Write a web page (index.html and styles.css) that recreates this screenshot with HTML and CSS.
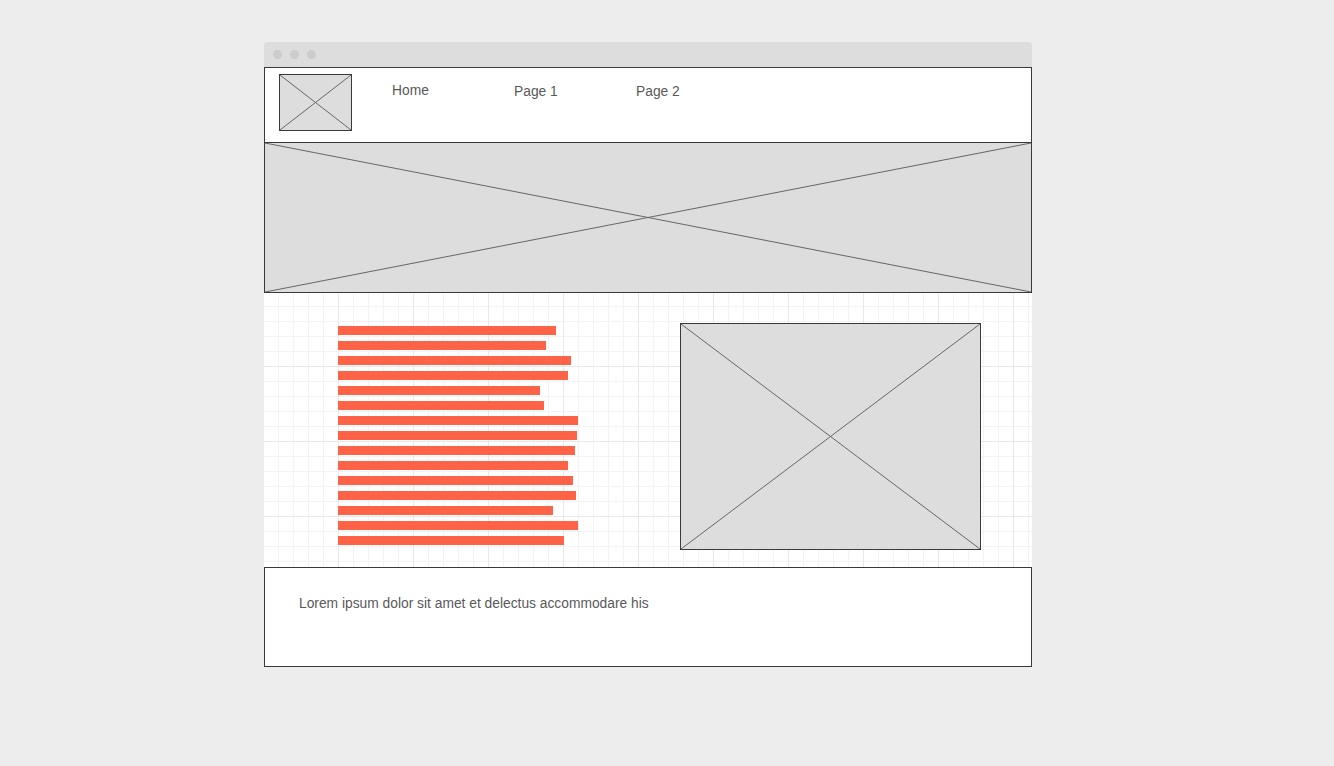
FILE: index.html
```html
<!DOCTYPE html>
<html>
<head>
<meta charset="utf-8">
<link rel="stylesheet" href="styles.css">
</head>
<body>
<div class="window">
  <div class="titlebar">
    <span class="dot"></span><span class="dot"></span><span class="dot"></span>
  </div>
  <header class="header">
    <div class="logo placeholder">
      <svg viewBox="0 0 100 100" preserveAspectRatio="none"><line x1="0" y1="0" x2="100" y2="100" vector-effect="non-scaling-stroke"/><line x1="100" y1="0" x2="0" y2="100" vector-effect="non-scaling-stroke"/></svg>
    </div>
    <nav class="nav">
      <a class="nav-item nav-home">Home</a>
      <a class="nav-item">Page 1</a>
      <a class="nav-item">Page 2</a>
    </nav>
  </header>
  <section class="hero placeholder">
    <svg viewBox="0 0 100 100" preserveAspectRatio="none"><line x1="0" y1="0" x2="100" y2="100" vector-effect="non-scaling-stroke"/><line x1="100" y1="0" x2="0" y2="100" vector-effect="non-scaling-stroke"/></svg>
  </section>
  <main class="content">
    <div class="bars">
      <div class="bar" style="width:218px"></div>
      <div class="bar" style="width:208px"></div>
      <div class="bar" style="width:233px"></div>
      <div class="bar" style="width:230px"></div>
      <div class="bar" style="width:202px"></div>
      <div class="bar" style="width:206px"></div>
      <div class="bar" style="width:240px"></div>
      <div class="bar" style="width:239px"></div>
      <div class="bar" style="width:237px"></div>
      <div class="bar" style="width:230px"></div>
      <div class="bar" style="width:235px"></div>
      <div class="bar" style="width:238px"></div>
      <div class="bar" style="width:215px"></div>
      <div class="bar" style="width:240px"></div>
      <div class="bar" style="width:226px"></div>
    </div>
    <div class="picture placeholder">
      <svg viewBox="0 0 100 100" preserveAspectRatio="none"><line x1="0" y1="0" x2="100" y2="100" vector-effect="non-scaling-stroke"/><line x1="100" y1="0" x2="0" y2="100" vector-effect="non-scaling-stroke"/></svg>
    </div>
  </main>
  <footer class="footer">
    <p class="footer-text">Lorem ipsum dolor sit amet et delectus accommodare his</p>
  </footer>
</div>
</body>
</html>
```

FILE: styles.css
```css
* { box-sizing: border-box; }
html, body { margin: 0; padding: 0; }
body {
  background: #ededed;
  font-family: "Liberation Sans", Arial, sans-serif;
  color: #595959;
}
.window {
  width: 768px;
  margin: 42px 0 0 264px;
}
.titlebar {
  height: 25px;
  background: #dddddd;
  border-radius: 4px 4px 0 0;
  display: flex;
  align-items: center;
  gap: 8px;
  padding-left: 9px;
}
.dot {
  width: 9px;
  height: 9px;
  border-radius: 50%;
  background: #cccccc;
}
.placeholder {
  background: #dddddd;
  border: 1px solid #3a3a3a;
  position: relative;
}
.placeholder svg {
  display: block;
  width: 100%;
  height: 100%;
}
.placeholder line {
  stroke: #666;
  stroke-width: 1;
}
.header {
  height: 76px;
  background: #fff;
  border: 1px solid #3a3a3a;
  display: flex;
  align-items: flex-start;
  padding: 6px 0 0 14px;
}
.logo {
  width: 73px;
  height: 57px;
}
.nav {
  display: flex;
  padding-left: 40px;
  padding-top: 9px;
}
.nav-item {
  width: 122px;
  font-size: 13.8px;
  color: #595959;
  text-decoration: none;
  display: block;
  margin-top: 1px;
}
.nav-home { margin-top: 0; }
.hero {
  height: 150px;
  border-top: none;
}
.content {
  height: 275px;
  margin-top: -1px;
  background-color: #fff;
  background-image:
    linear-gradient(to right, #e8e8e8 1px, transparent 1px),
    linear-gradient(to bottom, #e8e8e8 1px, transparent 1px),
    linear-gradient(to right, #f3f3f3 1px, transparent 1px),
    linear-gradient(to bottom, #f3f3f3 1px, transparent 1px);
  background-size: 75px 75px, 75px 75px, 15px 15px, 15px 15px;
  background-position: -1px -1px;
  display: flex;
  align-items: flex-start;
  padding: 34px 0 0 74px;
}
.bars {
  width: 342px;
  display: flex;
  flex-direction: column;
  gap: 6px;
}
.bar {
  height: 9px;
  background: #ff6347;
}
.picture {
  width: 301px;
  height: 227px;
  margin-top: -3px;
}
.footer {
  height: 100px;
  background: #fff;
  border: 1px solid #3a3a3a;
  padding: 28px 0 0 34px;
}
.footer-text {
  margin: 0;
  font-size: 13.8px;
  color: #595959;
}
```
